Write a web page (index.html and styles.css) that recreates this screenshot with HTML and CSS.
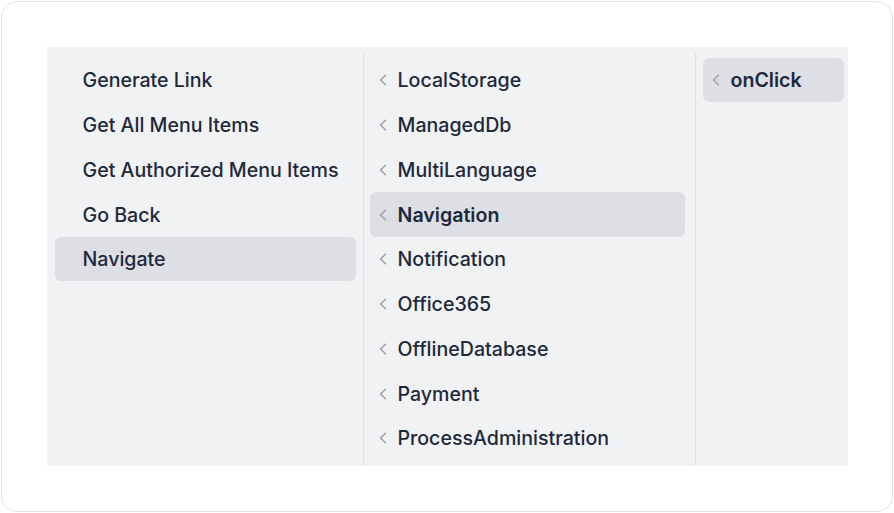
FILE: index.html
```html
<!DOCTYPE html>
<html lang="en">
<head>
    <meta charset="UTF-8">
    <meta name="viewport" content="width=device-width, initial-scale=1.0">
    <title>Menu Browser</title>
    <link rel="stylesheet" href="styles.css">
</head>
<body>
    <div class="card">
        <div class="browser">
            <div class="column col-actions">
                <div class="item"><span class="chev-space"></span>Generate Link</div>
                <div class="item"><span class="chev-space"></span>Get All Menu Items</div>
                <div class="item"><span class="chev-space"></span>Get Authorized Menu Items</div>
                <div class="item"><span class="chev-space"></span>Go Back</div>
                <div class="item active"><span class="chev-space"></span>Navigate</div>
            </div>
            <div class="column col-modules">
                <div class="item"><svg class="chev" viewBox="0 0 8 12"><path d="M6.5 1.2 1.5 6 6.5 10.8"/></svg>LocalStorage</div>
                <div class="item"><svg class="chev" viewBox="0 0 8 12"><path d="M6.5 1.2 1.5 6 6.5 10.8"/></svg>ManagedDb</div>
                <div class="item"><svg class="chev" viewBox="0 0 8 12"><path d="M6.5 1.2 1.5 6 6.5 10.8"/></svg>MultiLanguage</div>
                <div class="item active bold"><svg class="chev" viewBox="0 0 8 12"><path d="M6.5 1.2 1.5 6 6.5 10.8"/></svg>Navigation</div>
                <div class="item"><svg class="chev" viewBox="0 0 8 12"><path d="M6.5 1.2 1.5 6 6.5 10.8"/></svg>Notification</div>
                <div class="item"><svg class="chev" viewBox="0 0 8 12"><path d="M6.5 1.2 1.5 6 6.5 10.8"/></svg>Office365</div>
                <div class="item"><svg class="chev" viewBox="0 0 8 12"><path d="M6.5 1.2 1.5 6 6.5 10.8"/></svg>OfflineDatabase</div>
                <div class="item"><svg class="chev" viewBox="0 0 8 12"><path d="M6.5 1.2 1.5 6 6.5 10.8"/></svg>Payment</div>
                <div class="item"><svg class="chev" viewBox="0 0 8 12"><path d="M6.5 1.2 1.5 6 6.5 10.8"/></svg>ProcessAdministration</div>
            </div>
            <div class="column col-events">
                <div class="item active bold"><svg class="chev" viewBox="0 0 8 12"><path d="M6.5 1.2 1.5 6 6.5 10.8"/></svg>onClick</div>
            </div>
        </div>
    </div>
</body>
</html>
```

FILE: styles.css
```css
body {
    margin: 0;
    padding: 1px;
    font-family: Inter, "Noto Sans", sans-serif;
    background: #fff;
}

.card {
    box-sizing: border-box;
    width: 892px;
    height: 511px;
    border: 1.5px solid #e2e4e8;
    border-radius: 16px;
    padding: 44.5px 44.5px;
    background: #fff;
}

.browser {
    display: flex;
    height: 419px;
    background-color: #f1f2f4;
    overflow: hidden;
}

.column {
    box-sizing: border-box;
    padding-top: 11px;
    overflow: hidden;
}

.col-actions {
    width: 317px;
    padding-left: 8px;
    padding-right: 7px;
    border-right: 1px solid #e1e3e7;
}

.col-modules {
    width: 332px;
    padding-left: 6px;
    padding-right: 10px;
    border-right: 1px solid #e1e3e7;
}

.col-events {
    flex: 1;
    padding-left: 7px;
    padding-right: 4px;
}

.col-actions,
.col-modules {
    margin-top: 5px;
    padding-top: 6px;
}

.item {
    display: flex;
    align-items: center;
    height: 44.75px;
    padding-left: 9px;
    padding-top: 1px;
    border-radius: 6px;
    font-size: 19.6px;
    font-weight: 500;
    color: #1d293b;
    white-space: nowrap;
    box-sizing: border-box;
}

.item.active {
    background-color: #dedfe4;
}

.item.bold {
    font-weight: 600;
}

.chev,
.chev-space {
    width: 8px;
    height: 12px;
    margin-right: 11px;
    flex: none;
}

.chev path {
    fill: none;
    stroke: #9ca1ab;
    stroke-width: 1.5;
    stroke-linecap: round;
    stroke-linejoin: round;
}
```
